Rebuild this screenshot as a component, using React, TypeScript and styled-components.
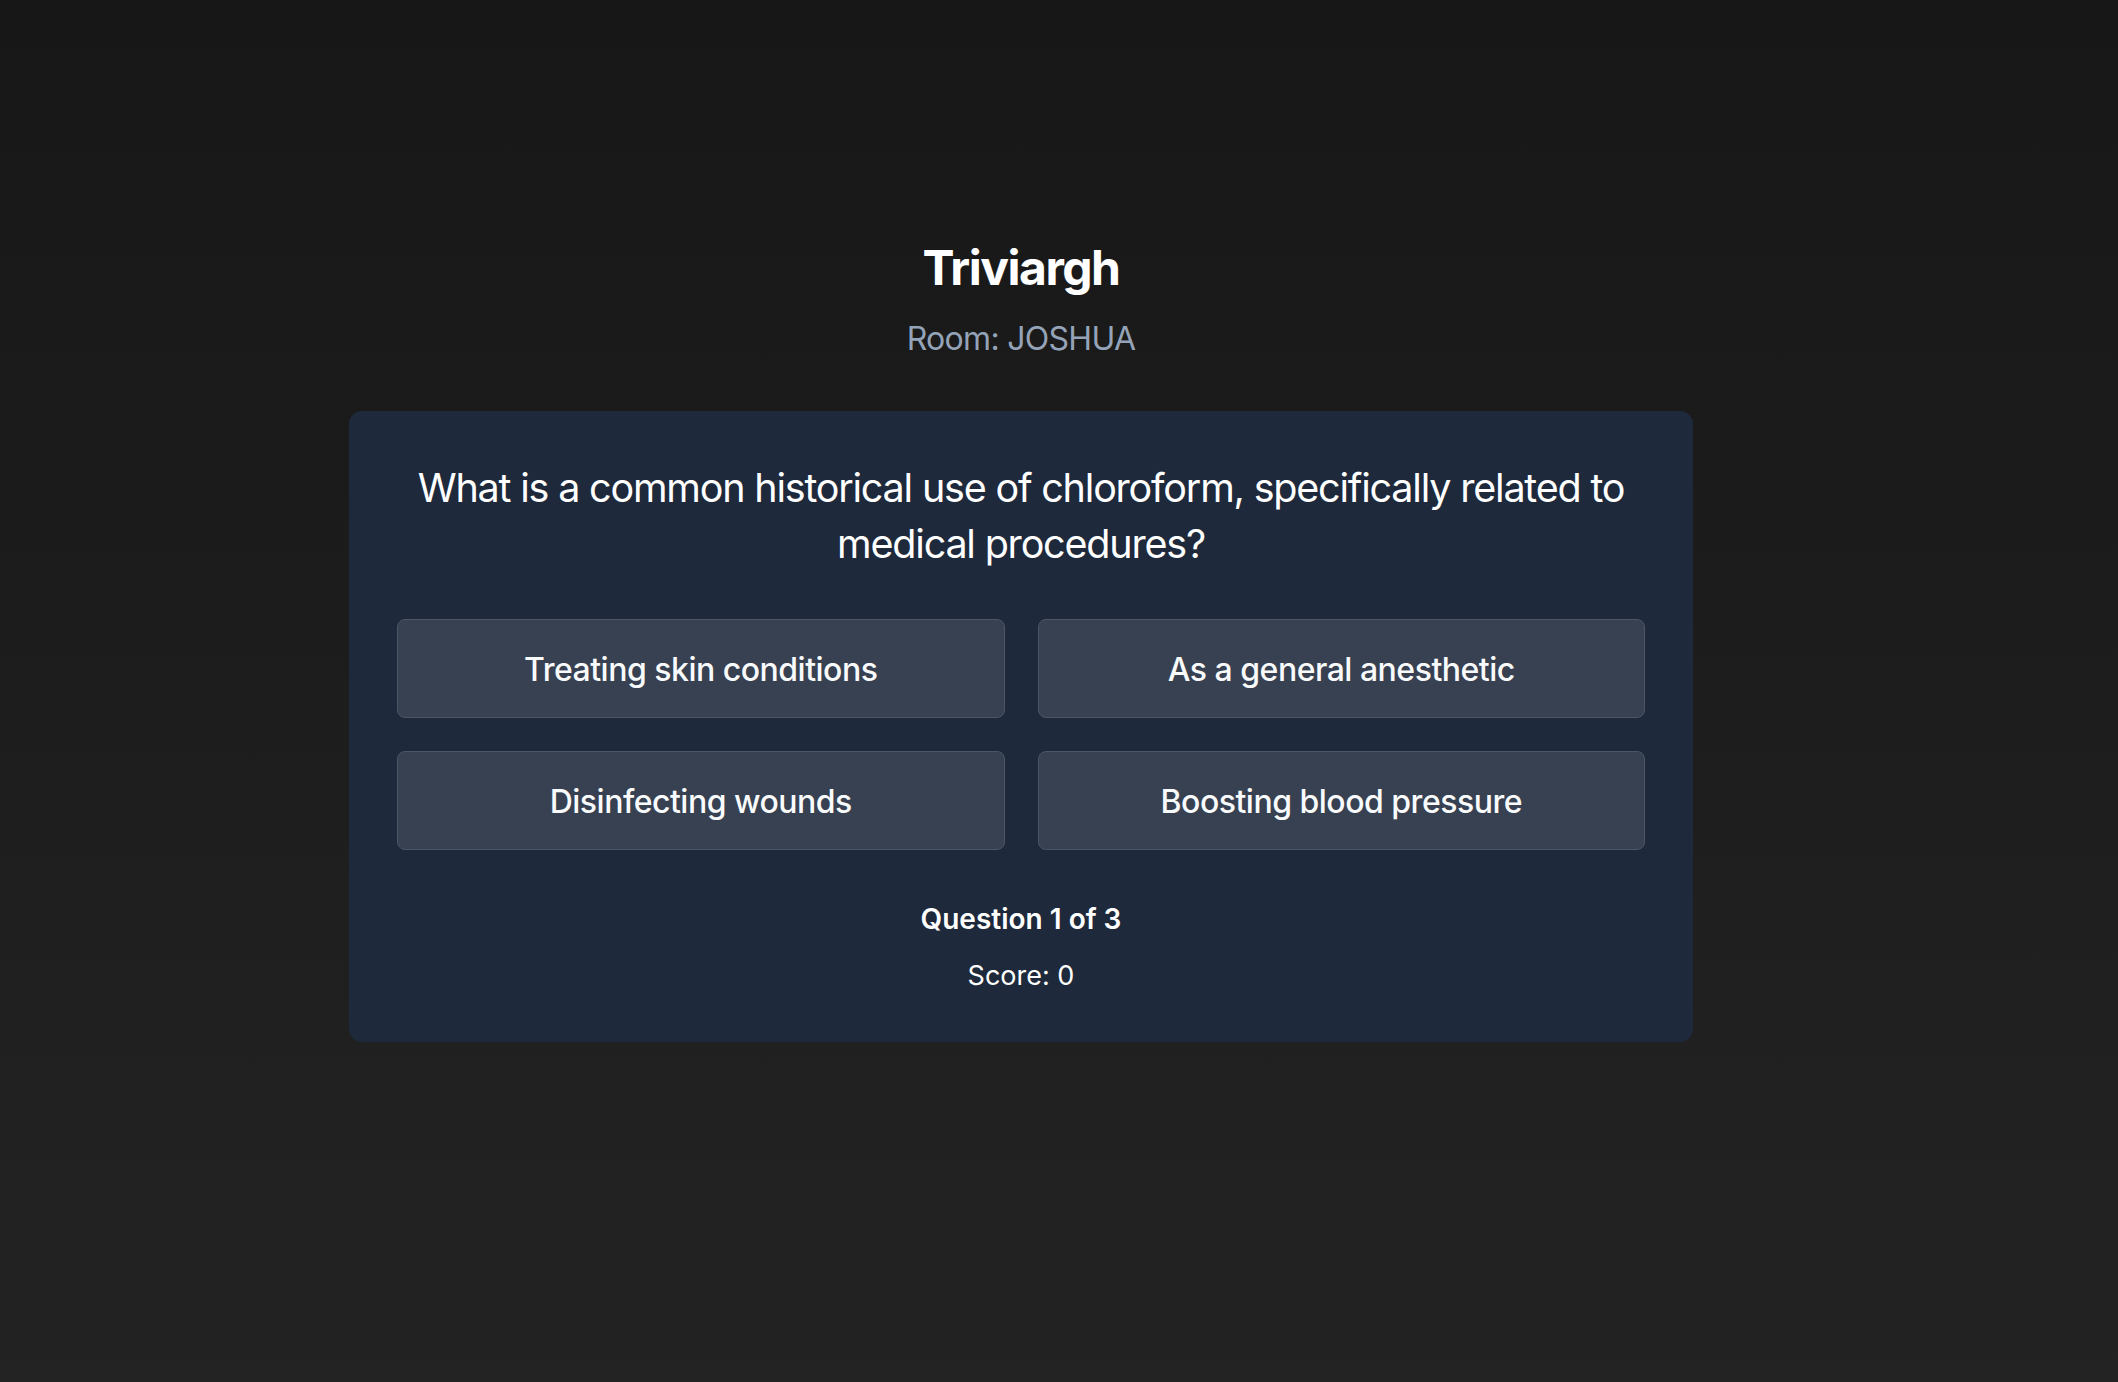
import React from 'react';
import styled, { createGlobalStyle } from 'styled-components';

const GlobalStyle = createGlobalStyle`
  * {
    box-sizing: border-box;
  }

  html,
  body {
    margin: 0;
    padding: 0;
    min-height: 100%;
  }

  body {
    font-family: Inter, 'Noto Sans', 'Liberation Sans', sans-serif;
    background: linear-gradient(180deg, #171717 0%, #1d1d1d 50%, #232323 100%);
    color: #f8fafc;
    -webkit-font-smoothing: antialiased;
  }
`;

const Page = styled.main`
  min-height: 1382px;
  padding: 239px 76px 0 0;
  display: flex;
  flex-direction: column;
  align-items: center;
`;

const Header = styled.header`
  display: flex;
  flex-direction: column;
  align-items: center;
  gap: 22px;
  margin-bottom: 52px;
`;

const Title = styled.h1`
  margin: 0;
  font-size: 48px;
  line-height: 58px;
  font-weight: 700;
  letter-spacing: -1.5px;
  color: #ffffff;
`;

const Room = styled.p`
  margin: 0;
  font-size: 32px;
  line-height: 40px;
  font-weight: 400;
  letter-spacing: -0.7px;
  color: #94a3b8;
`;

const Card = styled.section`
  width: 1344px;
  background: #1e293b;
  border-radius: 13px;
  padding: 49px 48px 48px;
  display: flex;
  flex-direction: column;
  align-items: center;
`;

const Question = styled.h2`
  margin: 0 0 47px;
  font-size: 39.5px;
  line-height: 56px;
  font-weight: 400;
  letter-spacing: -1.2px;
  text-align: center;
  color: #ffffff;
`;

const AnswerGrid = styled.div`
  width: 100%;
  display: grid;
  grid-template-columns: 1fr 1fr;
  gap: 33px 33px;
  margin-bottom: 51px;
`;

const AnswerButton = styled.button`
  height: 99px;
  padding: 2px 24px 0;
  background: #374151;
  border: 1px solid #4b5563;
  border-radius: 8px;
  color: #f9fafb;
  font-family: inherit;
  font-size: 32px;
  line-height: 40px;
  font-weight: 500;
  letter-spacing: -0.5px;
  cursor: pointer;
`;

const Footer = styled.div`
  display: flex;
  flex-direction: column;
  align-items: center;
  gap: 21px;
`;

const Progress = styled.p`
  margin: 0;
  font-size: 28px;
  line-height: 36px;
  font-weight: 600;
  color: #ffffff;
`;

const Score = styled.p`
  margin: 0;
  font-size: 27px;
  line-height: 36px;
  font-weight: 400;
  color: #ffffff;
`;

const answers = [
  'Treating skin conditions',
  'As a general anesthetic',
  'Disinfecting wounds',
  'Boosting blood pressure',
];

const App: React.FC = () => {
  return (
    <>
      <GlobalStyle />
      <Page>
        <Header>
          <Title>Triviargh</Title>
          <Room>Room: JOSHUA</Room>
        </Header>
        <Card>
          <Question>
            What is a common historical use of chloroform, specifically related to medical procedures?
          </Question>
          <AnswerGrid>
            {answers.map((answer) => (
              <AnswerButton key={answer}>{answer}</AnswerButton>
            ))}
          </AnswerGrid>
          <Footer>
            <Progress>Question 1 of 3</Progress>
            <Score>Score: 0</Score>
          </Footer>
        </Card>
      </Page>
    </>
  );
};

export default App;
